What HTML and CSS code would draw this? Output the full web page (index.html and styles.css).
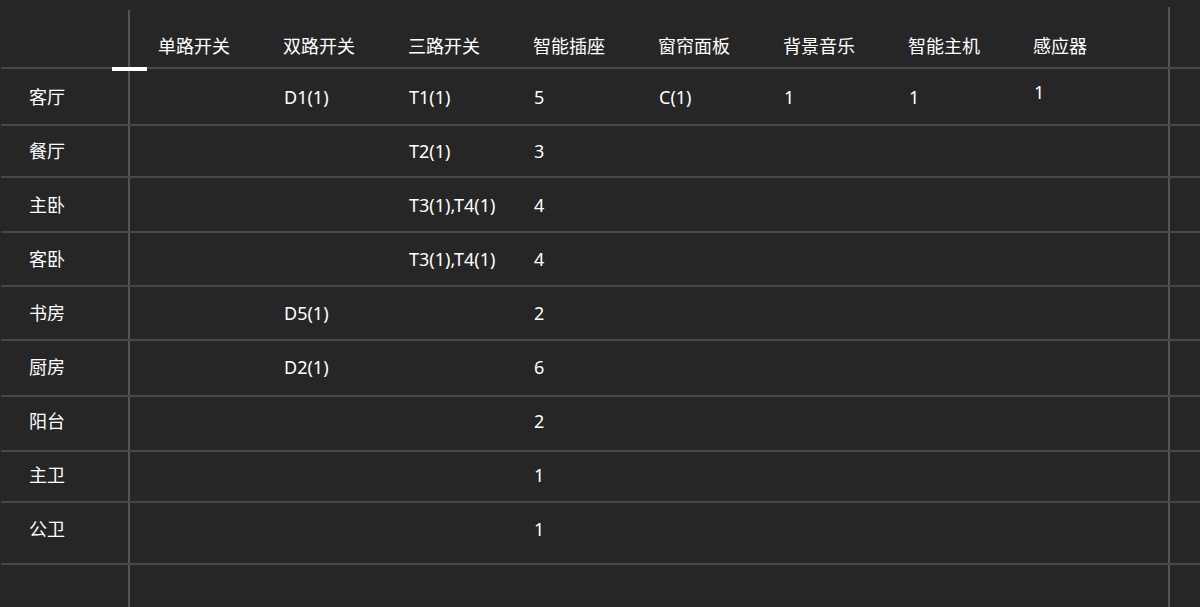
FILE: index.html
```html
<!DOCTYPE html>
<html lang="zh-CN">
<head>
<meta charset="utf-8">
<title>设备表</title>
<link rel="stylesheet" href="styles.css">
</head>
<body>
<div class="table">
  <div class="row head">
    <div class="cell name tab"></div>
    <div class="vline vl-left"></div>
    <div class="cell">单路开关</div>
    <div class="cell">双路开关</div>
    <div class="cell">三路开关</div>
    <div class="cell">智能插座</div>
    <div class="cell">窗帘面板</div>
    <div class="cell">背景音乐</div>
    <div class="cell">智能主机</div>
    <div class="cell">感应器</div>
    <div class="vline vl-right"></div>
    <div class="cell"></div>
  </div>
  <div class="row r1">
    <div class="cell name">客厅</div><div class="vline"></div>
    <div class="cell"></div><div class="cell">D1(1)</div><div class="cell">T1(1)</div><div class="cell">5</div><div class="cell">C(1)</div><div class="cell">1</div><div class="cell">1</div><div class="cell raised">1</div>
    <div class="vline"></div><div class="cell"></div>
  </div>
  <div class="row r2">
    <div class="cell name">餐厅</div><div class="vline"></div>
    <div class="cell"></div><div class="cell"></div><div class="cell">T2(1)</div><div class="cell">3</div><div class="cell"></div><div class="cell"></div><div class="cell"></div><div class="cell"></div>
    <div class="vline"></div><div class="cell"></div>
  </div>
  <div class="row r3">
    <div class="cell name">主卧</div><div class="vline"></div>
    <div class="cell"></div><div class="cell"></div><div class="cell">T3(1),T4(1)</div><div class="cell">4</div><div class="cell"></div><div class="cell"></div><div class="cell"></div><div class="cell"></div>
    <div class="vline"></div><div class="cell"></div>
  </div>
  <div class="row r4">
    <div class="cell name">客卧</div><div class="vline"></div>
    <div class="cell"></div><div class="cell"></div><div class="cell">T3(1),T4(1)</div><div class="cell">4</div><div class="cell"></div><div class="cell"></div><div class="cell"></div><div class="cell"></div>
    <div class="vline"></div><div class="cell"></div>
  </div>
  <div class="row r5">
    <div class="cell name">书房</div><div class="vline"></div>
    <div class="cell"></div><div class="cell">D5(1)</div><div class="cell"></div><div class="cell">2</div><div class="cell"></div><div class="cell"></div><div class="cell"></div><div class="cell"></div>
    <div class="vline"></div><div class="cell"></div>
  </div>
  <div class="row r6">
    <div class="cell name">厨房</div><div class="vline"></div>
    <div class="cell"></div><div class="cell">D2(1)</div><div class="cell"></div><div class="cell">6</div><div class="cell"></div><div class="cell"></div><div class="cell"></div><div class="cell"></div>
    <div class="vline"></div><div class="cell"></div>
  </div>
  <div class="row r7">
    <div class="cell name">阳台</div><div class="vline"></div>
    <div class="cell"></div><div class="cell"></div><div class="cell"></div><div class="cell">2</div><div class="cell"></div><div class="cell"></div><div class="cell"></div><div class="cell"></div>
    <div class="vline"></div><div class="cell"></div>
  </div>
  <div class="row r8">
    <div class="cell name">主卫</div><div class="vline"></div>
    <div class="cell"></div><div class="cell"></div><div class="cell"></div><div class="cell">1</div><div class="cell"></div><div class="cell"></div><div class="cell"></div><div class="cell"></div>
    <div class="vline"></div><div class="cell"></div>
  </div>
  <div class="row r9">
    <div class="cell name">公卫</div><div class="vline"></div>
    <div class="cell"></div><div class="cell"></div><div class="cell"></div><div class="cell">1</div><div class="cell"></div><div class="cell"></div><div class="cell"></div><div class="cell"></div>
    <div class="vline"></div><div class="cell"></div>
  </div>
  <div class="row filler">
    <div class="cell name"></div><div class="vline"></div>
    <div class="cell"></div><div class="cell"></div><div class="cell"></div><div class="cell"></div><div class="cell"></div><div class="cell"></div><div class="cell"></div><div class="cell"></div>
    <div class="vline"></div><div class="cell"></div>
  </div>
</div>
</body>
</html>
```

FILE: styles.css
```css
html, body {
  margin: 0;
  padding: 0;
  background: #262626;
  height: 100%;
}

body {
  font-family: "Noto Sans", "Noto Sans CJK SC", sans-serif;
  font-size: 18px;
  color: #ffffff;
  overflow: hidden;
}

.table {
  display: flex;
  flex-direction: column;
  width: 1200px;
}

.row {
  --pad: 14px;
  display: grid;
  grid-template-columns: 127px 2px repeat(7, 125px) 163px 2px 1fr;
  margin-left: 1px;
  border-bottom: 2px solid #474747;
  align-items: start;
}

.cell {
  padding-left: 29px;
  padding-top: var(--pad);
  line-height: 24px;
  white-space: nowrap;
}

.cell.name {
  padding-left: 28px;
}

.vline {
  align-self: stretch;
  background: #555555;
}

.head {
  height: 67px;
  align-items: end;
}

.head .cell {
  padding-top: 0;
  padding-bottom: 9px;
  padding-left: 28px;
}

.head .vl-left {
  margin-top: 10px;
}

.head .vl-right {
  margin-top: 7px;
}

.tab {
  position: relative;
  align-self: stretch;
}

.tab::after {
  content: "";
  position: absolute;
  left: 111px;
  bottom: -4px;
  width: 35px;
  height: 4px;
  background: #ffffff;
}

.r1 { height: 55px; --pad: 16px; }
.r2 { height: 50px; --pad: 13px; }
.r3 { height: 53px; --pad: 15px; }
.r4 { height: 52px; }
.r5 { height: 52px; }
.r6 { height: 54px; }
.r7 { height: 53px; --pad: 12px; }
.r8 { height: 49px; --pad: 11px; }
.r9 { height: 60px; }

.filler {
  height: 60px;
  border-bottom: none;
}

.r1 .raised {
  padding-top: 11px;
}
```
